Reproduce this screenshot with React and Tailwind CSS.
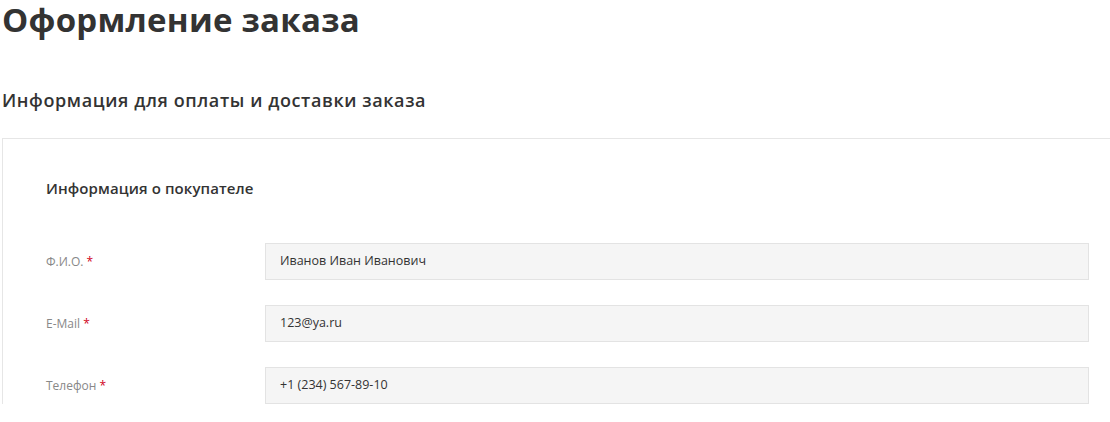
export default function App() {
  const rows = [
    { label: "Ф.И.О.", value: "Иванов Иван Иванович" },
    { label: "E-Mail", value: "123@ya.ru" },
    { label: "Телефон", value: "+1 (234) 567-89-10" },
  ];
  return (
    <div className="w-[1110px] h-[422px] overflow-hidden bg-white text-[#333]" style={{ fontFamily: '"Open Sans", "Noto Sans", sans-serif' }}>
      <h1 className="text-[33px] font-bold leading-[40px] pl-[2px] text-[#333] tracking-[0.25px]">Оформление заказа</h1>
      <h2 className="text-[18px] font-semibold leading-[24px] pl-[2px] mt-[48px] text-[#333] tracking-[0.6px]">Информация для оплаты и доставки заказа</h2>
      <div className="ml-[2px] mt-[26px] w-[1130px] border-t border-l border-[#e6e6e6] pl-[43px] pt-[39px]">
        <div className="text-[15px] font-semibold leading-[20px] text-[#333] tracking-[0.1px]">Информация о покупателе</div>
        <div className="mt-[45px] flex flex-col gap-[25px]">
          {rows.map((r) => (
            <div key={r.label} className="flex items-center">
              <div className="w-[219px] text-[12px] text-[#888]">
                {r.label} <span className="text-[#d0021b]">*</span>
              </div>
              <div className="w-[824px] h-[37px] bg-[#f5f5f5] border border-[#e3e3e3] flex items-center pl-[14px] text-[12.5px] text-[#333]">
                {r.value}
              </div>
            </div>
          ))}
        </div>
      </div>
    </div>
  );
}
